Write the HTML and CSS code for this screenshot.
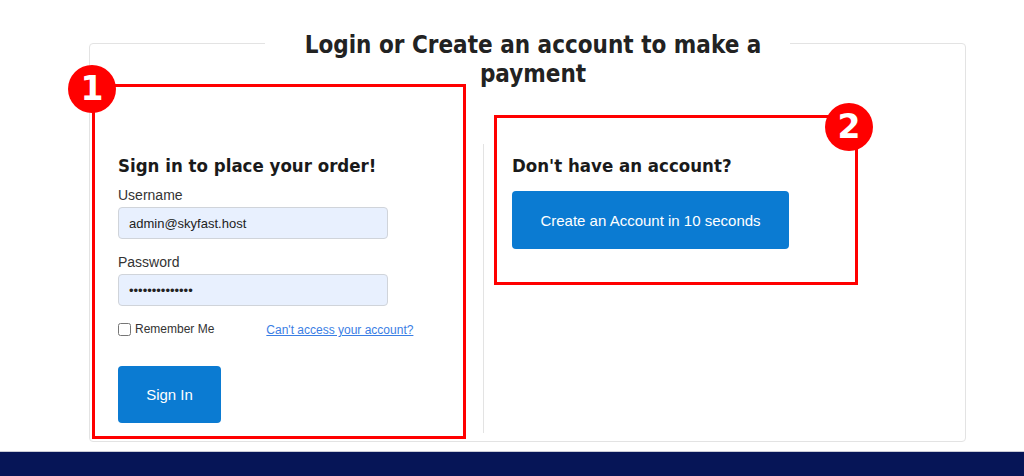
FILE: index.html
```html
<!DOCTYPE html>
<html>
<head>
  <meta charset="utf-8">
  <title>Login or Create an account</title>
  <link rel="stylesheet" href="styles.css">
</head>
<body>
  <div class="page">
    <div class="card">
      <h1 class="card-title">Login or Create an account to make a payment</h1>

      <div class="columns">
        <!-- Sign in -->
        <div class="col col-login">
          <h3 class="col-title">Sign in to place your order!</h3>

          <label for="username">Username</label>
          <input type="text" id="username" value="admin@skyfast.host">

          <label for="password" class="label-gap">Password</label>
          <input type="password" id="password" value="skyfast1234567">

          <div class="login-options">
            <label class="remember"><input type="checkbox"> Remember Me</label>
            <a href="#" class="forgot">Can't access your account?</a>
          </div>

          <button class="btn-primary btn-signin">Sign In</button>
        </div>

        <!-- Register -->
        <div class="col col-register">
          <h3 class="col-title">Don't have an account?</h3>
          <button class="btn-primary btn-create">Create an Account in 10 seconds</button>
        </div>
      </div>

      <!-- annotation boxes -->
      <div class="mark mark-one"><span class="badge badge-one">1</span></div>
      <div class="mark mark-two"><span class="badge badge-two">2</span></div>
    </div>
  </div>

  <div class="footer"></div>
</body>
</html>
```

FILE: styles.css
```css
* { box-sizing: border-box; }

body {
  margin: 0;
  font-family: "Liberation Sans", Arial, sans-serif;
  background: #fff;
  color: #333;
  overflow: hidden;
}

.page {
  padding: 28px 58px 0 89px;
}

.card {
  position: relative;
  border: 1px solid #e3e3e3;
  border-radius: 4px;
  margin-top: 15px;
  padding-bottom: 8px;
}

.card-title {
  width: 525px;
  margin: -13px auto 0;
  padding: 0 0 0 11px;
  background: #fff;
  font-family: "DejaVu Sans Condensed", "DejaVu Sans", Tahoma, sans-serif;
  font-weight: bold;
  font-size: 24px;
  line-height: 29px;
  text-align: center;
  color: #222;
}

.columns {
  display: flex;
  margin-top: 55px;
}

.col {
  padding: 11px 28px 0;
}

.col-login {
  width: 394px;
  padding-bottom: 10px;
  border-right: 1px solid #e3e3e3;
}

.col-register {
  flex: 1;
}

.col-title {
  margin: 0 0 10px;
  font-family: "DejaVu Sans Condensed", "DejaVu Sans", Tahoma, sans-serif;
  font-weight: bold;
  font-size: 18.5px;
  line-height: 22px;
  color: #1a1a1a;
}

label {
  display: block;
  font-size: 14px;
  line-height: 17px;
  color: #333;
  margin-bottom: 3px;
}

.label-gap {
  margin-top: 15px;
}

input[type="text"], input[type="password"] {
  display: block;
  width: 270px;
  height: 32px;
  padding: 0 10px;
  border: 1px solid #d0d4da;
  border-radius: 4px;
  background: #e8f0fe;
  font-family: "Liberation Sans", Arial, sans-serif;
  font-size: 13px;
  color: #222;
}

.login-options {
  display: flex;
  align-items: center;
  gap: 52px;
  margin-top: 15px;
  font-size: 12px;
}

.remember {
  display: flex;
  align-items: center;
  gap: 4px;
  margin: 0;
  font-size: 12px;
  color: #333;
}

.remember input {
  width: 13px;
  height: 13px;
  margin: 0;
}

.forgot {
  color: #3a7ee4;
  text-decoration: underline;
  margin-top: 1px;
}

.btn-primary {
  display: block;
  border: none;
  border-radius: 4px;
  background: #0b7bd2;
  color: #fff;
  font-family: "Liberation Sans", Arial, sans-serif;
  font-size: 15px;
  cursor: pointer;
}

.btn-signin {
  width: 103px;
  height: 57px;
  margin-top: 28px;
}

.btn-create {
  width: 277px;
  height: 58px;
  margin-top: 14px;
}

/* annotation overlays */
.mark {
  position: absolute;
  border: 3px solid #f00;
}

.mark-one {
  left: 2px;
  top: 40px;
  width: 374px;
  height: 355px;
}

.mark-two {
  left: 404px;
  top: 71px;
  width: 364px;
  height: 170px;
}

.badge {
  position: absolute;
  width: 48px;
  height: 48px;
  border-radius: 50%;
  background: #f00;
  color: #fff;
  font-family: "DejaVu Sans", Verdana, sans-serif;
  font-weight: bold;
  font-size: 33px;
  line-height: 48px;
  text-align: center;
}

.badge-one {
  left: -27px;
  top: -22px;
}

.badge-two {
  left: 328px;
  top: -15px;
}

.footer {
  margin-top: 9px;
  height: 30px;
  border-top: 1px solid #c9ccd6;
  background: #061557;
}
```
